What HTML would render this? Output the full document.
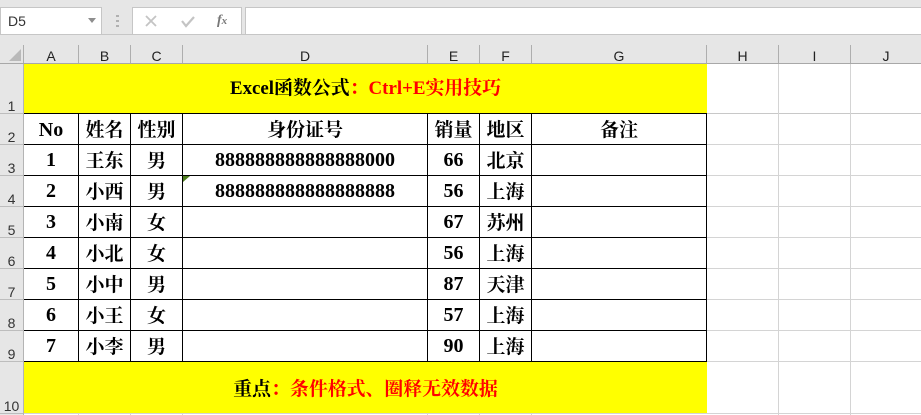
<!DOCTYPE html>
<html><head><meta charset="utf-8">
<style>
html,body{margin:0;padding:0;background:#fff}
body{width:921px;height:415px;position:relative;overflow:hidden}
div{position:absolute;box-sizing:border-box}
.h{background:#c8c8c8;height:1px;left:24px;width:897px}
.v{background:#d4d4d4;width:1px;top:64px;height:351px}
.bh{background:#000;height:1px;left:24px;width:683px}
.bv{background:#000;width:1px;top:113px;height:249px}
.ch{top:46px;height:17px;text-align:center;font:14px/20px "Liberation Sans",sans-serif;color:#222}
.sep{top:45px;height:18px;width:1px;background:#aeaeae}
.rh{left:0;width:23px;margin-top:1px;font:14px/16px "Liberation Sans",sans-serif;color:#333;text-align:center}
.rl{left:0;width:23px;height:1px;background:#bdbdbd}
.c{height:30px;line-height:30px;text-align:center;font-family:"Liberation Serif","Noto Serif CJK SC",serif;font-weight:700;font-size:19px;color:#000;white-space:nowrap;transform:translateY(2px)}
.n{font-size:20px;transform:none}
</style></head><body>

<!-- toolbar -->
<div style="left:0;top:0;width:921px;height:64px;background:#e6e6e6"></div>
<div style="left:0;top:7px;width:102px;height:28px;background:#fff;border:1px solid #c6c6c6;font:14px/27px 'Liberation Sans',sans-serif;color:#333;padding-left:7px">D5</div>
<svg style="position:absolute;left:87px;top:17px" width="10" height="7"><path d="M1 1h8L5 6z" fill="#8e8e8e"/></svg>
<svg style="position:absolute;left:115px;top:14px" width="6" height="14"><g fill="#b0b0b0"><rect x="1" y="1" width="3" height="2"/><rect x="1" y="6" width="3" height="2"/><rect x="1" y="11" width="3" height="2"/></g></svg>
<div style="left:132px;top:7px;width:110px;height:28px;background:#fff;border:1px solid #c6c6c6"></div>
<svg style="position:absolute;left:144px;top:14px" width="15" height="14"><path d="M2 2l10 10M12 2L2 12" stroke="#c4c4c4" stroke-width="1.8" fill="none"/></svg>
<svg style="position:absolute;left:180px;top:14px" width="16" height="14"><path d="M2 7l4 5L14 3" stroke="#c4c4c4" stroke-width="2.2" fill="none"/></svg>
<div style="left:217px;top:12px;width:14px;height:18px;font:italic 700 14px/18px 'Liberation Serif',serif;color:#777">f<span style="font-size:11px">x</span></div>
<div style="left:245px;top:7px;width:676px;height:28px;background:#fff;border:1px solid #c6c6c6;border-right:0"></div>
<div style="left:0;top:34px;width:921px;height:1px;background:#c6c6c6"></div>

<!-- column headers -->
<svg style="position:absolute;left:8px;top:48px" width="14" height="14"><path d="M13 1v12H1z" fill="#b9b9b9"/></svg>
<div style="left:0;top:63px;width:921px;height:1px;background:#a8a8a8"></div>
<div class="sep" style="left:23px"></div>
<div class="sep" style="left:78px"></div>
<div class="sep" style="left:130px"></div>
<div class="sep" style="left:182px"></div>
<div class="sep" style="left:427px"></div>
<div class="sep" style="left:479px"></div>
<div class="sep" style="left:531px"></div>
<div class="sep" style="left:706px"></div>
<div class="sep" style="left:778px"></div>
<div class="sep" style="left:850px"></div>
<div class="ch" style="left:24px;width:54px">A</div>
<div class="ch" style="left:79px;width:51px">B</div>
<div class="ch" style="left:131px;width:51px">C</div>
<div class="ch" style="left:183px;width:244px">D</div>
<div class="ch" style="left:428px;width:51px">E</div>
<div class="ch" style="left:480px;width:51px">F</div>
<div class="ch" style="left:532px;width:174px">G</div>
<div class="ch" style="left:707px;width:71px">H</div>
<div class="ch" style="left:779px;width:71px">I</div>
<div class="ch" style="left:851px;width:70px">J</div>

<!-- row headers -->
<div style="left:0;top:64px;width:24px;height:351px;background:#e6e6e6;border-right:1px solid #b4b4b4"></div>
<div class="rh" style="top:97px">1</div>
<div class="rh" style="top:128px">2</div>
<div class="rh" style="top:159px">3</div>
<div class="rh" style="top:190px">4</div>
<div class="rh" style="top:221px">5</div>
<div class="rh" style="top:252px">6</div>
<div class="rh" style="top:283px">7</div>
<div class="rh" style="top:314px">8</div>
<div class="rh" style="top:345px">9</div>
<div class="rh" style="top:397px">10</div>
<div class="rl" style="top:113px"></div>
<div class="rl" style="top:144px"></div>
<div class="rl" style="top:175px"></div>
<div class="rl" style="top:206px"></div>
<div class="rl" style="top:237px"></div>
<div class="rl" style="top:268px"></div>
<div class="rl" style="top:299px"></div>
<div class="rl" style="top:330px"></div>
<div class="rl" style="top:361px"></div>
<div class="rl" style="top:413px"></div>

<!-- gridlines right -->
<div class="h" style="top:113px"></div>
<div class="h" style="top:144px;background:#d4d4d4"></div>
<div class="h" style="top:175px;background:#d4d4d4"></div>
<div class="h" style="top:206px;background:#d4d4d4"></div>
<div class="h" style="top:237px;background:#d4d4d4"></div>
<div class="h" style="top:268px;background:#d4d4d4"></div>
<div class="h" style="top:299px;background:#d4d4d4"></div>
<div class="h" style="top:330px;background:#d4d4d4"></div>
<div class="h" style="top:361px;background:#d4d4d4"></div>
<div class="h" style="top:413px;background:#d4d4d4"></div>
<div class="v" style="left:778px"></div>
<div class="v" style="left:850px"></div>
<div class="v" style="left:78px;top:413px;height:2px"></div>
<div class="v" style="left:130px;top:413px;height:2px"></div>
<div class="v" style="left:182px;top:413px;height:2px"></div>
<div class="v" style="left:427px;top:413px;height:2px"></div>
<div class="v" style="left:479px;top:413px;height:2px"></div>
<div class="v" style="left:531px;top:413px;height:2px"></div>

<!-- yellow bands -->
<div style="left:24px;top:64px;width:683px;height:49px;background:#ff0"></div>
<div style="left:24px;top:362px;width:683px;height:51px;background:#ff0"></div>

<!-- table lines -->
<div style="left:24px;top:114px;width:683px;height:248px;background:#fff"></div>
<div class="bh" style="top:113px"></div>
<div class="bh" style="top:144px"></div>
<div class="bh" style="top:175px"></div>
<div class="bh" style="top:206px"></div>
<div class="bh" style="top:237px"></div>
<div class="bh" style="top:268px"></div>
<div class="bh" style="top:299px"></div>
<div class="bh" style="top:330px"></div>
<div class="bh" style="top:361px"></div>
<div class="bv" style="left:78px"></div>
<div class="bv" style="left:130px"></div>
<div class="bv" style="left:182px"></div>
<div class="bv" style="left:427px"></div>
<div class="bv" style="left:479px"></div>
<div class="bv" style="left:531px"></div>
<div class="bv" style="left:706px"></div>
<svg style="position:absolute;left:183px;top:176px" width="7" height="7"><path d="M0 0h7L0 6z" fill="#4e7f1e"/></svg>

<!-- titles -->
<div class="c" style="left:24px;top:72px;width:683px;font-size:18.9px">Excel函数公式<span style="color:#f00">：Ctrl+E实用技巧</span></div>
<div class="c" style="left:24px;top:373px;width:683px;font-size:18.9px">重点<span style="color:#f00">：条件格式、圈释无效数据</span></div>

<!-- row 2 -->
<div class="c n" style="left:24px;top:115px;width:54px">No</div>
<div class="c" style="left:79px;top:114px;width:51px">姓名</div>
<div class="c" style="left:131px;top:114px;width:51px">性别</div>
<div class="c" style="left:183px;top:114px;width:244px">身份证号</div>
<div class="c" style="left:428px;top:114px;width:51px">销量</div>
<div class="c" style="left:480px;top:114px;width:51px">地区</div>
<div class="c" style="left:532px;top:114px;width:174px">备注</div>

<!-- row 3 -->
<div class="c n" style="left:24px;top:145px;width:54px">1</div>
<div class="c" style="left:79px;top:145px;width:51px">王东</div>
<div class="c" style="left:131px;top:145px;width:51px">男</div>
<div class="c n" style="left:183px;top:145px;width:244px">888888888888888000</div>
<div class="c n" style="left:428px;top:145px;width:51px">66</div>
<div class="c" style="left:480px;top:145px;width:51px">北京</div>
<!-- row 4 -->
<div class="c n" style="left:24px;top:176px;width:54px">2</div>
<div class="c" style="left:79px;top:176px;width:51px">小西</div>
<div class="c" style="left:131px;top:176px;width:51px">男</div>
<div class="c n" style="left:183px;top:176px;width:244px">888888888888888888</div>
<div class="c n" style="left:428px;top:176px;width:51px">56</div>
<div class="c" style="left:480px;top:176px;width:51px">上海</div>
<!-- row 5 -->
<div class="c n" style="left:24px;top:207px;width:54px">3</div>
<div class="c" style="left:79px;top:207px;width:51px">小南</div>
<div class="c" style="left:131px;top:207px;width:51px">女</div>
<div class="c n" style="left:428px;top:207px;width:51px">67</div>
<div class="c" style="left:480px;top:207px;width:51px">苏州</div>
<!-- row 6 -->
<div class="c n" style="left:24px;top:238px;width:54px">4</div>
<div class="c" style="left:79px;top:238px;width:51px">小北</div>
<div class="c" style="left:131px;top:238px;width:51px">女</div>
<div class="c n" style="left:428px;top:238px;width:51px">56</div>
<div class="c" style="left:480px;top:238px;width:51px">上海</div>
<!-- row 7 -->
<div class="c n" style="left:24px;top:269px;width:54px">5</div>
<div class="c" style="left:79px;top:269px;width:51px">小中</div>
<div class="c" style="left:131px;top:269px;width:51px">男</div>
<div class="c n" style="left:428px;top:269px;width:51px">87</div>
<div class="c" style="left:480px;top:269px;width:51px">天津</div>
<!-- row 8 -->
<div class="c n" style="left:24px;top:300px;width:54px">6</div>
<div class="c" style="left:79px;top:300px;width:51px">小王</div>
<div class="c" style="left:131px;top:300px;width:51px">女</div>
<div class="c n" style="left:428px;top:300px;width:51px">57</div>
<div class="c" style="left:480px;top:300px;width:51px">上海</div>
<!-- row 9 -->
<div class="c n" style="left:24px;top:331px;width:54px">7</div>
<div class="c" style="left:79px;top:331px;width:51px">小李</div>
<div class="c" style="left:131px;top:331px;width:51px">男</div>
<div class="c n" style="left:428px;top:331px;width:51px">90</div>
<div class="c" style="left:480px;top:331px;width:51px">上海</div>

</body></html>
